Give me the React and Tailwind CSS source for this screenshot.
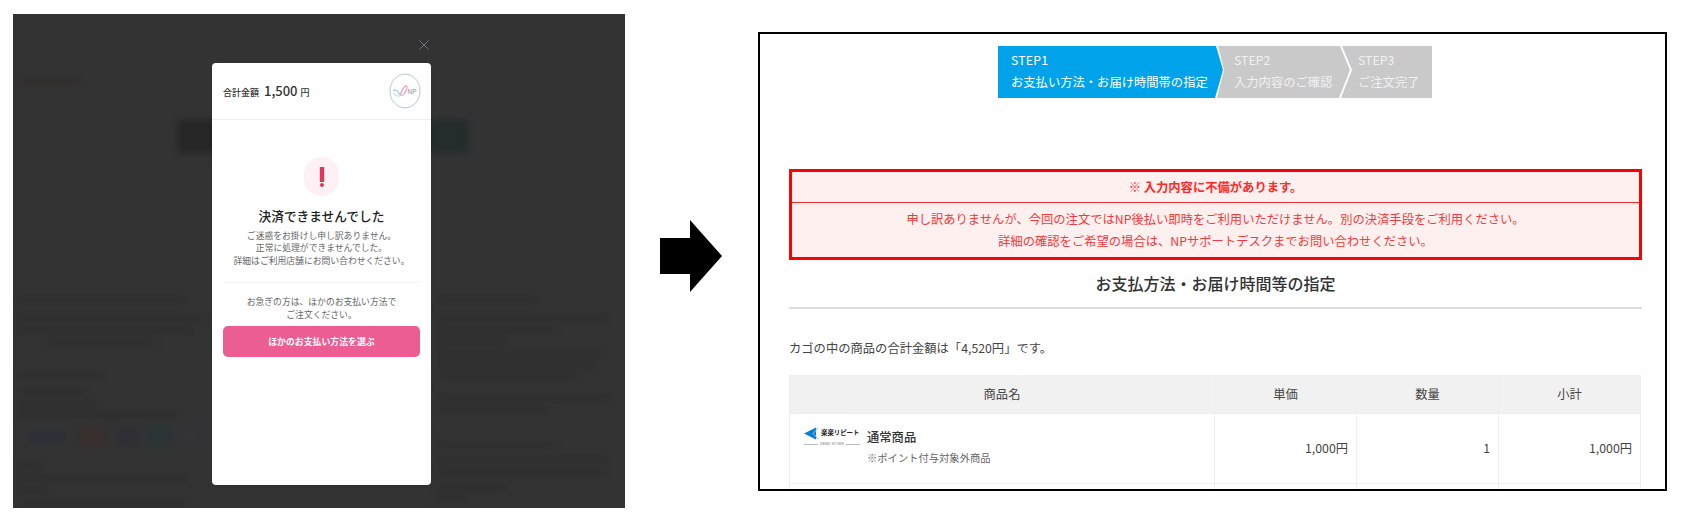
import React from 'react'

const jp = "font-['Noto_Sans_CJK_JP','Noto_Sans',sans-serif]"

// blurred page behind the dialog, only faint bars are readable
const leftLines = [
  'w-[168px] bg-[#2a2a2a]',
  'w-[185px] mt-[12px]',
  'w-[175px] mt-[6px]',
  'w-[110px] mt-[6px] ml-[30px]',
  'w-[85px] mt-[27px] bg-[#2a2a2a]',
  'w-[70px] mt-[11px]',
  'w-[80px] mt-[7px]',
  'w-[160px] mt-[4px]',
]
const leftLinesBelow = [
  'w-[25px] mt-[16px] bg-[#2a2a2a]',
  'w-[170px] mt-[6px]',
  'w-[30px] mt-[6px]',
  'w-[170px] mt-[7px]',
]
const rightLines = [
  'w-[100px] bg-[#2a2a2a]',
  'w-[170px] mt-[12px]',
  'w-[120px] mt-[6px]',
  'w-[70px] mt-[6px]',
  'w-[165px] mt-[6px]',
  'w-[160px] mt-[5px]',
  'w-[140px] mt-[5px]',
  'w-[175px] mt-[15px]',
  'w-[110px] mt-[7px]',
  'w-[120px] mt-[29px] bg-[#2a2a2a]',
  'w-[170px] mt-[9px]',
  'w-[170px] mt-[7px]',
  'w-[70px] mt-[9px]',
  'w-[30px] mt-[4px]',
]

function Lines({ items }) {
  return items.map((cls, i) => <div key={i} className={'h-[6px] bg-[#2e2e2e] ' + cls} />)
}

function Backdrop() {
  return (
    <div className="blur-[3px]">
      <div className="ml-[7px] mt-[65px] h-[5px] w-[60px] bg-[#302e2c]" />
      <div className="ml-[165px] mt-[36px] flex h-[33px] w-[290px] bg-[#262626]">
        <div className="ml-auto h-full w-[40px] bg-[#252c2e]" />
      </div>
      <div className="mt-[144px] flex">
        <div className="ml-[4px] w-[200px]">
          <Lines items={leftLines} />
          <div className="mt-[9px] ml-[11px] flex h-[20px]">
            <div className="h-[10px] w-[37px] self-center bg-[#2c303a]" />
            <div className="ml-[13px] w-[27px] bg-[#382e2e]" />
            <div className="ml-[12px] w-[23px] bg-[#302e36]" />
            <div className="ml-[10px] w-[20px] bg-[#2b3336]" />
            <div className="ml-[10px] w-[20px] bg-[#343338]" />
          </div>
          <Lines items={leftLinesBelow} />
        </div>
        <div className="ml-[220px] w-[180px]">
          <Lines items={rightLines} />
        </div>
      </div>
    </div>
  )
}

function NpLogo() {
  return (
    <svg width="32" height="36" viewBox="0 0 32 36" className="shrink-0">
      <ellipse cx="16" cy="18" rx="15" ry="17" fill="#fff" stroke="#b9c7d6" strokeWidth="1" />
      <path d="M4 18c2-2 4-1 5 1s3 4 5 3" fill="none" stroke="#8fd3f0" strokeWidth="1.2" />
      <path d="M4 20c2 3 6 4 9 2" fill="none" stroke="#a9def5" strokeWidth="1" />
      <path d="M11 22c2-5 4-9 6-9 2 0 1 5-3 9" fill="none" stroke="#f4a6c8" strokeWidth="1.4" />
      <text x="18.5" y="20.5" fontSize="6.5" fill="#8a8f94" fontFamily="Liberation Sans, sans-serif">NP</text>
    </svg>
  )
}

function Dialog() {
  return (
    <div className={'ml-[199px] mt-[49px] h-[422px] w-[219px] rounded-[4px] bg-white shadow-sm text-center ' + jp}>
      <div className="flex h-[57px] items-center justify-between border-b border-[#eeeeee] pl-[11px] pr-[10px]">
        <div className="flex items-baseline text-[#333333]">
          <span className="text-[9px] font-medium">合計金額</span>
          <span className="ml-[5px] text-[13px] font-medium">1,500</span>
          <span className="ml-[3px] text-[9px] font-medium">円</span>
        </div>
        <NpLogo />
      </div>
      <div className="mx-auto mt-[37px] flex h-[39px] w-[35px] items-center justify-center rounded-full bg-[#fdf1f5]">
        <svg width="6" height="20" viewBox="0 0 6 20">
          <rect x="0.8" y="0" width="4.4" height="15" fill="#e0365a" />
          <circle cx="3" cy="18" r="2" fill="#e0365a" />
        </svg>
      </div>
      <div className="mt-[10px] text-[12.7px] font-medium leading-[20px] text-[#222222]">決済できませんでした</div>
      <div className="mt-[4px] text-[8.8px] leading-[12.4px] text-[#666666]">
        <div>ご迷惑をお掛けし申し訳ありません。</div>
        <div>正常に処理ができませんでした。</div>
        <div>詳細はご利用店舗にお問い合わせください。</div>
      </div>
      <div className="mx-[11px] mt-[15px] border-t border-[#f3f3f3]" />
      <div className="mt-[12px] text-[8.8px] leading-[13px] text-[#666666]">
        <div>お急ぎの方は、ほかのお支払い方法で</div>
        <div>ご注文ください。</div>
      </div>
      <div className="mx-[11px] mt-[5px] flex h-[31px] items-center justify-center rounded-[5px] bg-[#ec5d94] text-[8.9px] font-bold text-white">
        ほかのお支払い方法を選ぶ
      </div>
    </div>
  )
}

function LeftPanel() {
  return (
    <div className="relative ml-[13px] mt-[14px] h-[494px] w-[612px] shrink-0 overflow-hidden bg-[#333333]">
      <Backdrop />
      <svg width="10" height="10" viewBox="0 0 10 10" className="absolute left-[406px] top-[26px]">
        <path d="M0.5 0.5L9.5 9.5M9.5 0.5L0.5 9.5" stroke="#6b7680" strokeWidth="1" />
      </svg>
      <div className="absolute inset-0 flex items-start">
        <Dialog />
      </div>
    </div>
  )
}

function Stepper() {
  return (
    <div className="ml-[209px] mt-[12px] flex h-[52px] text-[12.3px] leading-[22px] text-white">
      <div className="w-[225px] bg-[#00a3ea] pl-[13px] pt-[3px] [clip-path:polygon(0_0,218px_0,225px_24px,217px_100%,0_100%)]">
        <div className="tracking-[0.2px]">STEP1</div>
        <div>お支払い方法・お届け時間帯の指定</div>
      </div>
      <div className="ml-[-6px] w-[133px] bg-[#c9c9c9] pl-[17px] pt-[3px] text-[#f1f1f1] [clip-path:polygon(1px_0,123px_0,133px_24px,122px_100%,0_100%,7px_24px)]">
        <div>STEP2</div>
        <div>入力内容のご確認</div>
      </div>
      <div className="ml-[-9px] w-[91px] bg-[#c9c9c9] pl-[17px] pt-[3px] text-[#f1f1f1] [clip-path:polygon(1px_0,100%_0,100%_100%,0_100%,11px_24px)]">
        <div>STEP3</div>
        <div>ご注文完了</div>
      </div>
    </div>
  )
}

function ErrorBox() {
  return (
    <div className="mt-[71px] h-[91px] border-[3px] border-[#ff0000] bg-[#fff0f0] text-center text-[12.3px] text-[#f23a3a]">
      <div className="h-[31px] border-b border-[#f03030] text-[12.3px] font-bold leading-[30px] text-[#ff2a2a]">※ 入力内容に不備があります。</div>
      <div className="pt-[5px] leading-[22px]">
        <div>申し訳ありませんが、今回の注文ではNP後払い即時をご利用いただけません。別の決済手段をご利用ください。</div>
        <div>詳細の確認をご希望の場合は、NPサポートデスクまでお問い合わせください。</div>
      </div>
    </div>
  )
}

function ItemThumb() {
  return (
    <div className="w-[56px] shrink-0">
      <div className="flex h-[13px] items-center">
        <svg width="16" height="13" viewBox="0 0 16 13" className="shrink-0">
          <path d="M0 6.5L12 0.5V12.5Z" fill="#0a7fd0" />
          <path d="M14 1L9 6.5L14 12" fill="none" stroke="#7fc8ee" strokeWidth="1" />
        </svg>
        <span className="ml-[1px] whitespace-nowrap text-[6.4px] font-bold leading-none text-[#222222]">楽楽リピート</span>
      </div>
      <div className="mt-[3px] flex items-center">
        <div className="h-px flex-1 bg-[#bbbbbb]" />
        <span className="mx-[2px] font-['Liberation_Sans',sans-serif] text-[3.5px] leading-none text-[#777777]">DEMO STORE</span>
        <div className="h-px flex-1 bg-[#bbbbbb]" />
      </div>
    </div>
  )
}

function CartTable() {
  const cell = 'border border-[#eeeeee]'
  return (
    <table className="mt-[18px] w-[851px] table-fixed border-collapse text-[12.3px] text-[#444444]">
      <colgroup>
        <col className="w-[425px]" />
        <col className="w-[142px]" />
        <col className="w-[142px]" />
        <col className="w-[142px]" />
      </colgroup>
      <thead>
        <tr className="h-[38px] bg-[#f1f1f1]">
          <th className={cell + ' font-normal'}>商品名</th>
          <th className={cell + ' font-normal'}>単価</th>
          <th className={cell + ' font-normal'}>数量</th>
          <th className={cell + ' font-normal'}>小計</th>
        </tr>
      </thead>
      <tbody>
        <tr className="h-[70px]">
          <td className={cell + ' pb-[2px] pl-[14px]'}>
            <div className="flex items-start">
              <ItemThumb />
              <div className="ml-[7px]">
                <div className="font-medium leading-[20px] text-[#333333]">通常商品</div>
                <div className="mt-[1px] text-[10.3px] leading-[20px] text-[#666666]">※ポイント付与対象外商品</div>
              </div>
            </div>
          </td>
          <td className={cell + ' pr-[8px] text-right'}>1,000円</td>
          <td className={cell + ' pr-[8px] text-right'}>1</td>
          <td className={cell + ' pr-[8px] text-right'}>1,000円</td>
        </tr>
        <tr className="h-[20px]">
          <td className={cell} />
          <td className={cell} />
          <td className={cell} />
          <td className={cell} />
        </tr>
      </tbody>
    </table>
  )
}

function OrderFrame() {
  return (
    <div className={'ml-[36px] mt-[32px] h-[459px] w-[909px] shrink-0 overflow-hidden border-2 border-black bg-white pl-[29px] pr-[23px] ' + jp}>
      <Stepper />
      <ErrorBox />
      <h2 className="mt-[11px] text-center text-[16px] font-medium leading-[24px] text-[#333333]">お支払方法・お届け時間等の指定</h2>
      <div className="mt-[12px] h-[2px] bg-[#dddddd]" />
      <p className="mt-[30px] text-[12.3px] leading-[18px] text-[#444444]">カゴの中の商品の合計金額は「4,520円」です。</p>
      <CartTable />
    </div>
  )
}

export default function App() {
  return (
    <div className="flex h-[517px] w-[1684px] items-start overflow-hidden bg-white">
      <LeftPanel />
      <svg width="62" height="72" viewBox="0 0 62 72" className="ml-[35px] mt-[220px] shrink-0">
        <path d="M0 18H30V0L62 36L30 72V54H0Z" fill="#000" />
      </svg>
      <OrderFrame />
    </div>
  )
}
